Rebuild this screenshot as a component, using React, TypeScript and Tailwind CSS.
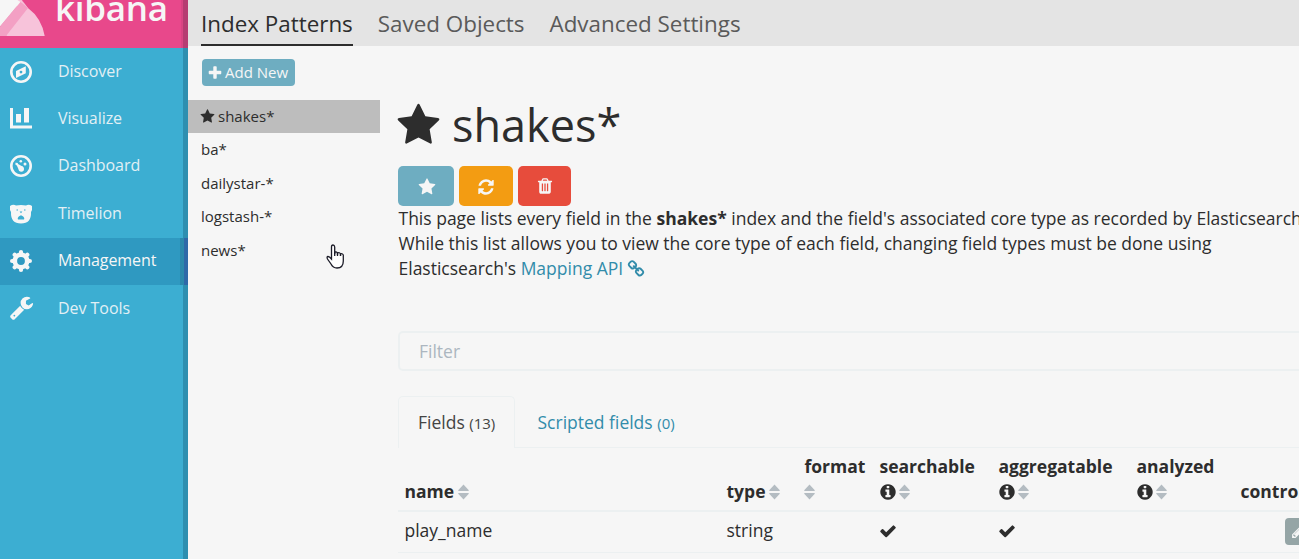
import React from "react";

const paths = {
  star: "M1728 647q0 22-26 48l-363 354 86 500q1 7 1 20 0 21-10.5 35.5t-30.5 14.5q-19 0-40-12l-449-236-449 236q-22 12-40 12-21 0-31.5-14.5t-10.5-35.5q0-6 2-20l86-500-364-354q-25-27-25-48 0-37 56-46l502-73 225-455q19-41 49-41t49 41l225 455 502 73q56 9 56 46z",
  refresh: "M1639 1056q0 5-1 7-64 268-268 434.5t-478 166.5q-146 0-282.5-55t-243.5-157l-129 129q-19 19-45 19t-45-19-19-45v-448q0-26 19-45t45-19h448q26 0 45 19t19 45-19 45l-137 137q71 66 161 102t187 36q134 0 250-65t186-179q11-17 53-117 8-23 30-23h192q13 0 22.5 9.5t9.5 22.5zm25-800v448q0 26-19 45t-45 19h-448q-26 0-45-19t-19-45 19-45l138-138q-148-137-349-137-134 0-250 65t-186 179q-11 17-53 117-8 23-30 23h-199q-13 0-22.5-9.5t-9.5-22.5v-7q65-268 270-434.5t480-166.5q146 0 284 55.5t245 156.5l130-129q19-19 45-19t45 19 19 45z",
  trash: "M704 1376v-704q0-14-9-23t-23-9h-64q-14 0-23 9t-9 23v704q0 14 9 23t23 9h64q14 0 23-9t9-23zm256 0v-704q0-14-9-23t-23-9h-64q-14 0-23 9t-9 23v704q0 14 9 23t23 9h64q14 0 23-9t9-23zm256 0v-704q0-14-9-23t-23-9h-64q-14 0-23 9t-9 23v704q0 14 9 23t23 9h64q14 0 23-9t9-23zm-544-992h448l-48-117q-7-9-17-11h-317q-10 2-17 11zm928 32v64q0 14-9 23t-23 9h-96v948q0 83-47 143.5t-113 60.5h-832q-66 0-113-58.5t-47-141.5v-952h-96q-14 0-23-9t-9-23v-64q0-14 9-23t23-9h309l70-167q15-37 54-63t79-26h320q40 0 79 26t54 63l70 167h309q14 0 23 9t9 23z",
  info: "M1152 1376v-160q0-14-9-23t-23-9h-96v-512q0-14-9-23t-23-9h-320q-14 0-23 9t-9 23v160q0 14 9 23t23 9h96v320h-96q-14 0-23 9t-9 23v160q0 14 9 23t23 9h448q14 0 23-9t9-23zm-128-896v-160q0-14-9-23t-23-9h-192q-14 0-23 9t-9 23v160q0 14 9 23t23 9h192q14 0 23-9t9-23zm640 416q0 209-103 385.5t-279.5 279.5-385.5 103-385.5-103-279.5-279.5-103-385.5 103-385.5 279.5-279.5 385.5-103 385.5 103 279.5 279.5 103 385.5z",
  check: "M1671 566q0 40-28 68l-724 724-136 136q-28 28-68 28t-68-28l-136-136-362-362q-28-28-28-68t28-68l136-136q28-28 68-28t68 28l294 295 656-657q28-28 68-28t68 28l136 136q28 28 28 68z",
  plus: "M1600 736v192q0 40-28 68t-68 28h-416v416q0 40-28 68t-68 28h-192q-40 0-68-28t-28-68v-416h-416q-40 0-68-28t-28-68v-192q0-40 28-68t68-28h416v-416q0-40 28-68t68-28h192q40 0 68 28t28 68v416h416q40 0 68 28t28 68z",
  chain: "M1520 1216q0-40-28-68l-208-208q-28-28-68-28-42 0-72 32 3 3 19 18.5t21.5 21.5 15 19 13 25.5 3.5 27.5q0 40-28 68t-68 28q-15 0-27.5-3.5t-25.5-13-19-15-21.5-21.5-18.5-19q-33 31-33 73 0 40 28 68l206 207q27 27 68 27 40 0 68-26l147-146q28-28 28-67zm-703-705q0-40-28-68l-206-207q-28-28-68-28-39 0-68 27l-147 146q-28 28-28 67 0 40 28 68l208 208q27 27 68 27 42 0 72-31-3-3-19-18.5t-21.5-21.5-15-19-13-25.5-3.5-27.5q0-40 28-68t68-28q15 0 27.5 3.5t25.5 13 19 15 21.5 21.5 18.5 19q33-31 33-73zm895 705q0 120-85 203l-147 146q-83 83-203 83-121 0-204-85l-206-207q-83-83-83-203 0-123 88-209l-88-88q-86 88-208 88-120 0-204-84l-208-208q-84-84-84-204t85-203l147-146q83-83 203-83 121 0 204 85l206 207q83 83 83 203 0 123-88 209l88 88q86-88 208-88 120 0 204 84l208 208q84 84 84 204z",
  pencil: "M491 1536l91-91-235-235-91 91v107h128v128h107zm523-928q0-22-22-22-10 0-17 7l-542 542q-7 7-7 17 0 22 22 22 10 0 17-7l542-542q7-7 7-17zm-54-192l416 416-832 832h-416v-416zm683 96q0 53-37 90l-166 166-416-416 166-165q36-38 90-38 53 0 91 38l235 234q37 39 37 91z",
  wrench: "M448 1472q0-26-19-45t-45-19-45 19-19 45 19 45 45 19 45-19 19-45zm644-420l-682 682q-37 37-90 37-52 0-91-37l-106-108q-38-36-38-90 0-53 38-91l681-681q39 98 114.5 173.5t173.5 114.5zm634-435q0 39-23 106-47 134-164.5 217.5t-258.5 83.5q-185 0-316.5-131.5t-131.5-316.5 131.5-316.5 316.5-131.5q58 0 121.5 16.5t107.5 46.5q16 11 16 28t-16 28l-293 169v224l193 107q5-3 79-48.5t135.5-81 70.5-35.5q15 0 23.5 10t8.5 25z",
};

function Icon({ name, className }: { name: keyof typeof paths; className: string }) {
  return (
    <svg viewBox="0 0 1792 1792" fill="currentColor" className={className}>
      <path d={paths[name]} />
    </svg>
  );
}

function Sort() {
  return (
    <svg viewBox="0 0 11 16" className="ml-1 inline-block h-4 w-[11px] align-[-2px]" fill="#b4bcc2">
      <path d="M5.5 .5 10.8 6.2Q11 7 10.2 7H.8Q0 7 .2 6.2ZM5.500 15.500 10.800 9.800Q11 9 10.200 9H.8Q0 9 .2 9.800Z" />
    </svg>
  );
}

const Info = () => <Icon name="info" className="-ml-px inline-block h-[18px] w-[18px] align-[-3px]" />;

const navIcon = "h-[22px] w-[22px] overflow-visible";

const Discover = () => (
  <svg viewBox="0 0 22 22" className={navIcon}>
    <circle cx="11" cy="11" r="9.700" fill="none" stroke="#f6f6f6" strokeWidth="2.600" />
    <path fill="#f6f6f6" fillRule="evenodd" d="M15.800 5.300V12.300L6 16.900V9.900ZM11 9.700a1.400 1.400 0 1 0 0 2.800 1.400 1.400 0 0 0 0-2.800Z" />
  </svg>
);

const Visualize = () => (
  <svg viewBox="0 0 22 22" className={navIcon} fill="#f6f6f6">
    <path d="M0 0h3v17.500h19V20.500H0ZM6 6h5v8.500H6ZM14 0h5v14.500h-5Z" />
  </svg>
);

const Dashboard = () => (
  <svg viewBox="0 0 22 22" className={navIcon} fill="#f6f6f6">
    <circle cx="11" cy="11" r="9.700" fill="none" stroke="#f6f6f6" strokeWidth="2.600" />
    <circle cx="11.300" cy="14" r="2.700" />
    <path d="M5.300 7.600 13 11.800 9.400 15.700Z" />
    <circle cx="10.800" cy="6.300" r="1.300" />
    <circle cx="15" cy="9" r="1.500" />
    <circle cx="6.700" cy="9" r="1.300" />
  </svg>
);

const Timelion = () => (
  <svg viewBox="0 0 22 22" className={navIcon}>
    <path fill="#f6f6f6" d="M0 3Q3 1 6 2.400 11 1.400 16 2.400 19 1 22 3V7L21 9Q21.500 20.500 11 20.500T1 9L0 7Z" />
    <path fill="#3caed2" d="M6.500 6.500h1.500V7.500H6.500ZM14 6.500h1.500V7.500H14ZM9.600 8.500h2.800l-1.400 1.700ZM11 12.300q3.300 1.200 3.300 3.700-.5 .8-1.500 .5H9.200q-1 .3-1.500-.5Q7.700 13.500 11 12.300Z" />
  </svg>
);

const Gear = () => (
  <svg viewBox="-11 -11 22 22" className={navIcon} stroke="#f6f6f6" fill="none">
    <circle r="6.200" strokeWidth="4.600" />
    <path strokeWidth="4.200" strokeLinecap="round" d="M0-7V-8.900M0 7V8.900M-7 0H-8.900M7 0H8.900M5-5 6.300-6.300M-5-5-6.300-6.300M5 5 6.300 6.300M-5 5-6.300 6.300" />
  </svg>
);

const nav = [
  { label: "Discover", icon: <Discover /> },
  { label: "Visualize", icon: <Visualize /> },
  { label: "Dashboard", icon: <Dashboard /> },
  { label: "Timelion", icon: <Timelion /> },
  { label: "Management", icon: <Gear />, active: true },
  { label: "Dev Tools", icon: <Icon name="wrench" className="-mt-0.5 -ml-[1.500px] h-[25px] w-[25px] text-[#f6f6f6]" /> },
];

function Sidebar() {
  return (
    <aside className="flex h-full w-[188px] shrink-0 flex-col bg-[#3caed2]">
      <div className="flex h-12 shrink-0 overflow-hidden bg-[#e8488b]">
        <svg viewBox="0 0 46 36" className="h-9 w-[46px] shrink-0">
          <path fill="#f7c3da" d="M19 0 28 8Q41.500 18 44.700 36H6Z" />
          <path fill="#f3a0c4" d="M0 26.500 22 0 28 8 6 36H0Z" />
          <path fill="#f6f6f6" d="M0 0H22L0 26.500Z" />
          <path fill="#f7c3da" d="M17.500 0H21Q25 4.500 28 8L22 3Z" />
        </svg>
        <span className="-mt-[17px] ml-[9px] w-[125px] font-['Open_Sans',sans-serif] text-[35px] leading-[49px] font-semibold tracking-[-0.3px] text-[#f6f6f6]">
          kibana
        </span>
        <div className="ml-auto flex">
          <i className="w-0.5 bg-[#d94583]" />
          <i className="w-[5px] bg-[#b63d72]" />
        </div>
      </div>
      {nav.map((n) => (
        <div
          key={n.label}
          className={`flex h-[47.400px] shrink-0 items-center pl-[10px] text-[16px] ${n.active ? "bg-[#2f99c1] text-[#f6f6f6]" : "text-[#e2f0f5]"}`}
        >
          <span className="flex w-12 shrink-0">{n.icon}</span>
          <span className="-mt-px tracking-[-0.05px]">{n.label}</span>
          <div className="ml-auto flex self-stretch">
            {n.active && <i className="w-1 bg-[#2c89ac]" />}
            <i className={n.active ? "w-1 bg-[#2f69a8]" : "w-[5px] bg-[#2e8fb0]"} />
          </div>
        </div>
      ))}
      <div className="flex flex-1 justify-end">
        <i className="w-[5px] bg-[#2e8fb0]" />
      </div>
    </aside>
  );
}

const patterns = ["ba*", "dailystar-*", "logstash-*", "news*"];

function PatternList() {
  return (
    <div className="relative w-[192px] shrink-0 pt-[13px] text-[15px]">
      <button className="ml-3.5 flex h-[27px] w-[93px] items-center rounded-[4px] bg-[#6eadc1] pl-[5px] text-[15px] text-[#f6f6f6]">
        <Icon name="plus" className="mr-[2px] h-[16px] w-[16px]" />
        Add New
      </button>
      <div className="mt-3.5 flex h-[33px] items-center bg-[#bdbdbd] pl-3">
        <Icon name="star" className="mr-[3px] h-[15px] w-[15px]" />
        shakes*
      </div>
      {patterns.map((p) => (
        <div key={p} className="flex h-[33.500px] items-center pl-[13px]">
          {p}
        </div>
      ))}
      <svg viewBox="0 0 19 25" className="absolute top-[198px] left-[138px] h-[25px] w-[19px]" fill="#fff" stroke="#1b1b27" strokeWidth="1.300">
        <path d="M5.500 15V3Q5.500 1 7 1T8.700 3V10V8.500Q10 7 11.500 9V11 9Q13.500 8 14.500 10V12 10Q16 9 17.300 11V17Q17.300 24 11 24 7 24 5 20L1.500 15Q.5 12.500 2 12.500T5.500 15Z" />
        <path d="M8.700 8V12M11.500 9V12M14.500 10V12" />
      </svg>
    </div>
  );
}

function FieldsTable() {
  const th = "pb-[6px] pl-[6.500px] align-bottom text-left font-bold";
  return (
    <table className="w-[928px] table-fixed border-collapse">
      <colgroup>
        <col className="w-[322px]" />
        <col className="w-[78px]" />
        <col className="w-[75px]" />
        <col className="w-[119px]" />
        <col className="w-[138px]" />
        <col className="w-[104px]" />
        <col className="w-[92px]" />
      </colgroup>
      <thead>
        <tr className="h-[63px] border-b-2 border-[#ecf0f1]">
          <th className={th}>name<Sort /></th>
          <th className={th}>type<Sort /></th>
          <th className={th}>format<br /><span className="-ml-[5px]"><Sort /></span></th>
          <th className={th}>searchable<br /><Info /><span className="-ml-[2px]"><Sort /></span></th>
          <th className={th}>aggregatable<br /><Info /><span className="-ml-[2px]"><Sort /></span></th>
          <th className={th}>analyzed<br /><Info /><span className="-ml-[2px]"><Sort /></span></th>
          <th className={th}>controls</th>
        </tr>
      </thead>
      <tbody>
        <tr className="h-[41px] border-b border-[#ecf0f1]">
          <td className="pb-[2px] pl-[6.500px]">play_name</td>
          <td className="pb-[2px] pl-[6.500px]">string</td>
          <td />
          <td className="pb-[2px] pl-[6px]"><Icon name="check" className="h-[18px] w-[18px]" /></td>
          <td className="pb-[2px] pl-[6px]"><Icon name="check" className="h-[18px] w-[18px]" /></td>
          <td />
          <td className="pl-[51px]">
            <span className="flex h-[27px] w-[28px] items-center rounded-[4px] bg-[#95a5a6] pl-1.5 text-[#f6f6f6]">
              <Icon name="pencil" className="h-[15px] w-[15px]" />
            </span>
          </td>
        </tr>
      </tbody>
    </table>
  );
}

function Details() {
  const btn = "flex h-10 items-center justify-center rounded-[5px] text-[#f6f6f6]";
  return (
    <section className="ml-[18px] w-[928px] shrink-0 pt-12">
      <h1 className="flex h-[62px] items-center text-[45px] leading-[62px]">
        <Icon name="star" className="-ml-[2px] mr-[11px] h-[45px] w-[45px]" />
        shakes*
      </h1>
      <div className="mt-[10px] flex gap-[5px]">
        <button className={`${btn} w-14 bg-[#6eadc1] pl-px pt-px`}><Icon name="star" className="h-[18px] w-[18px]" /></button>
        <button className={`${btn} w-[54px] bg-[#f39c12] pt-px`}><Icon name="refresh" className="h-[18px] w-[18px]" /></button>
        <button className={`${btn} w-[53px] bg-[#e74c3c]`}><Icon name="trash" className="h-[18px] w-[18px]" /></button>
      </div>
      <p className="pl-[0.500px] whitespace-nowrap">
        This page lists every field in the <b>shakes*</b> index and the field's associated core type as recorded by Elasticsearch.
        <br />
        While this list allows you to view the core type of each field, changing field types must be done using
        <br />
        Elasticsearch's <span className="text-[#328caa]">Mapping API <Icon name="chain" className="-ml-px inline-block h-[18px] w-[18px] align-[-3px]" /></span>
      </p>
      <div className="mt-[50px] flex h-10 items-center rounded-[5px] border-2 border-[#ecf0f1] pl-[19px] text-[#acb6c0]">Filter</div>
      <div className="mt-[25px] flex h-[52px]">
        <div className="w-[117px] rounded-t-[5px] border border-b-0 border-[#ecf0f1] pt-[13px] pl-[19px] text-[#444]">
          Fields <small className="text-[15px]">(13)</small>
        </div>
        <div className="flex-1 border-b border-[#ecf0f1] pt-[14px] pl-[22.500px] text-[#328caa]">
          Scripted fields <small className="text-[15px]">(0)</small>
        </div>
      </div>
      <FieldsTable />
    </section>
  );
}

export default function App() {
  return (
    <div className="flex h-[559px] w-full overflow-hidden bg-[#f6f6f6] font-['Open_Sans',sans-serif] text-[17.500px] leading-[25px] text-[#2d2d2d]">
      <Sidebar />
      <main className="min-w-0 flex-1">
        <header className="flex h-[46px] gap-[25px] bg-[#e4e4e4] pl-[13px] text-[22.400px] leading-[47px] text-[#5a5a5a]">
          <span className="border-b-2 border-[#2d2d2d] text-[#2d2d2d]">Index Patterns</span>
          <span>Saved Objects</span>
          <span>Advanced Settings</span>
        </header>
        <div className="flex">
          <PatternList />
          <Details />
        </div>
      </main>
    </div>
  );
}
